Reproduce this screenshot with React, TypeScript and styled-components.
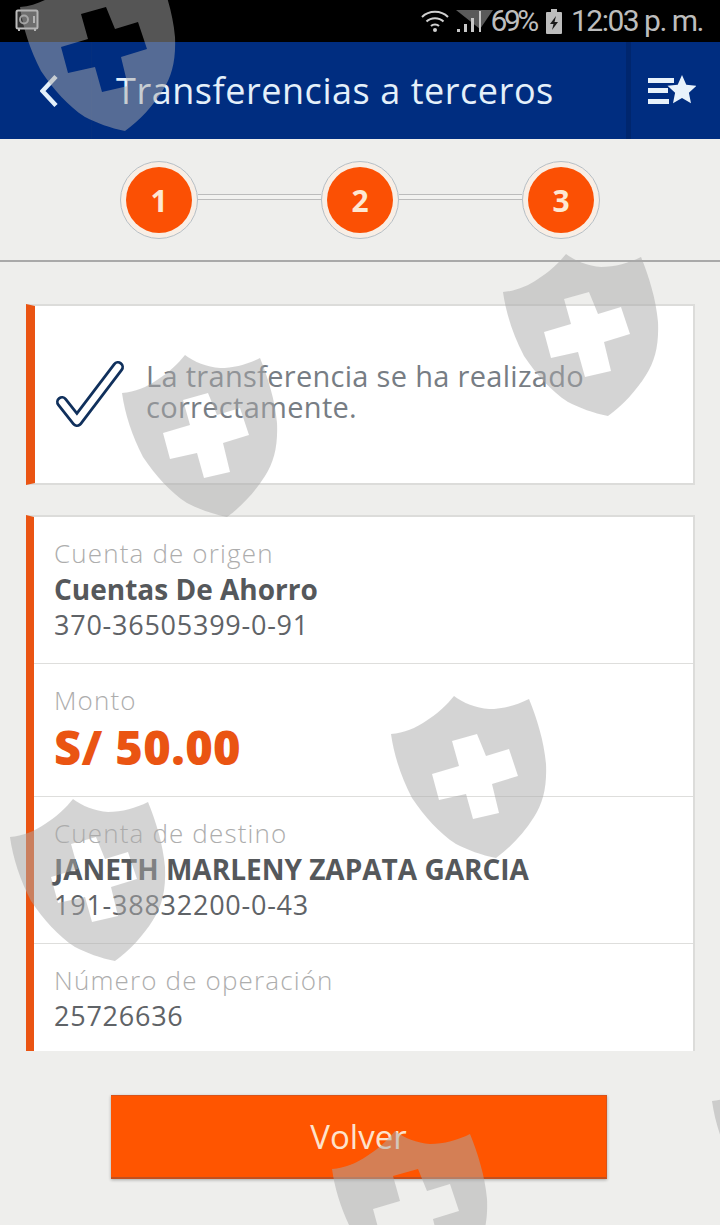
import React from "react"
import styled, { createGlobalStyle } from "styled-components"

const GlobalStyle = createGlobalStyle`
  html, body {
    margin: 0;
    padding: 0;
    background: #eeeeec;
  }
`

const Page = styled.div`
  position: relative;
  width: 720px;
  height: 1225px;
  overflow: hidden;
  background: #eeeeec;
  font-family: "Open Sans", Lato, sans-serif;
`

const StatusBar = styled.div`
  height: 42px;
  background: #000;
  display: flex;
  align-items: center;
  padding: 0 17px 0 15px;
  color: #bdbdbd;
  font-family: Roboto, sans-serif;
  font-size: 30px;
`

const StatusIcon = styled.svg<{ $gap?: number }>`
  display: block;
  flex: none;
  overflow: visible;
  margin-left: ${(p) => p.$gap ?? 0}px;
`

const Spacer = styled.div`
  flex: 1;
`

const Percent = styled.span`
  position: relative;
  margin-left: 8px;
  letter-spacing: -3.4px;
  line-height: 40px;
`

const Clock = styled.span`
  margin-left: 9px;
  letter-spacing: -1.5px;
  line-height: 40px;
`

const Header = styled.header`
  height: 97px;
  background: #002d80;
  display: flex;
  align-items: stretch;
`

const BackButton = styled.div`
  width: 92px;
  display: flex;
  align-items: center;
  padding-left: 40px;
  box-sizing: border-box;
  border-right: 1px solid #042f7e;
`

const Title = styled.h1`
  flex: 1;
  margin: 0;
  padding-left: 24px;
  display: flex;
  align-items: center;
  color: #e4f0fa;
  font-size: 36px;
  font-weight: 400;
  letter-spacing: 0.55px;
`

const FavButton = styled.div`
  width: 94px;
  box-sizing: border-box;
  border-left: 5px solid #00266e;
  display: flex;
  align-items: center;
  padding-left: 17px;
`

const Stepper = styled.div`
  height: 123px;
  box-sizing: border-box;
  padding-top: 22px;
  display: flex;
  justify-content: center;
  align-items: flex-start;
  border-bottom: 2px solid #a9a9a9;
`

const Step = styled.div`
  width: 78px;
  height: 78px;
  box-sizing: border-box;
  flex: none;
  border: 1px solid #b6bfc6;
  border-radius: 50%;
  padding: 5px;
  background: #f8eee5;
`

const StepNumber = styled.div`
  width: 100%;
  height: 100%;
  border-radius: 50%;
  background: #fb5004;
  color: #fde8d2;
  font-size: 30px;
  font-weight: 700;
  display: flex;
  align-items: center;
  justify-content: center;
`

const Connector = styled.div`
  width: 123px;
  height: 6px;
  margin-top: 33px;
  box-sizing: border-box;
  background: #f2f2f0;
  border-top: 1px solid #bcbcbc;
  border-bottom: 1px solid #bcbcbc;
`

const Content = styled.main`
  padding: 42px 25px 0 26px;
`

const Notice = styled.section`
  height: 181px;
  box-sizing: border-box;
  background: #fff;
  border: 2px solid #dcdcda;
  border-left: 9px solid #ea5412;
  display: flex;
  align-items: center;
  padding: 0 0 0 21px;
`

const CheckSvg = styled.svg`
  flex: none;
  margin-top: 4px;
  overflow: visible;
`

const NoticeText = styled.p`
  margin: 0 0 8px 18px;
  color: #777d84;
  font-size: 29px;
  font-weight: 400;
  line-height: 31px;
  letter-spacing: 0.3px;
`

const Details = styled.section`
  margin-top: 30px;
  height: 536px;
  box-sizing: border-box;
  background: #fff;
  border: 2px solid #dcdcda;
  border-bottom: none;
  border-left: 8px solid #ea5412;
  overflow: hidden;
`

const Row = styled.div<{ $height: number; $last?: boolean }>`
  height: ${(p) => p.$height}px;
  box-sizing: border-box;
  padding: 18px 0 0 20px;
  border-bottom: ${(p) => (p.$last ? "none" : "1px solid #dededc")};
`

const Label = styled.div`
  color: #adadad;
  font-size: 26px;
  font-weight: 300;
  line-height: 36px;
  letter-spacing: 1.15px;
`

const Name = styled.div`
  color: #55585b;
  font-size: 28px;
  font-weight: 700;
  line-height: 36px;
`

const AccountNumber = styled.div`
  color: #5f6367;
  font-size: 27px;
  font-weight: 400;
  line-height: 36px;
  letter-spacing: 0.75px;
`

const Amount = styled.div`
  color: #ea5412;
  font-size: 47px;
  font-weight: 800;
  line-height: 58px;
  letter-spacing: 0.4px;
`

const BackAction = styled.button`
  display: block;
  width: 496px;
  height: 84px;
  margin: 44px 0 0 111px;
  border: none;
  border-top: 1px solid #d9531a;
  border-bottom: 2px solid #c2501f;
  border-right: 1px solid #d9531a;
  box-shadow: 0 1px 3px rgba(0, 0, 0, 0.3);
  background: #ff5500;
  color: #fde3cc;
  font-family: "Open Sans", sans-serif;
  font-size: 33px;
  font-weight: 400;
  padding: 0;
`

const Watermark = styled.svg<{ $x: number; $y: number }>`
  position: absolute;
  left: ${(p) => p.$x}px;
  top: ${(p) => p.$y}px;
  pointer-events: none;
`

const SHIELD =
  "M63 1 C72 8 85 13 98 14 C112 14 126 10 138 4 C146 24 153 46 155 69 C156 92 152 108 143 122 C133 138 120 152 105 163 C90 160 77 155 65 149 C48 138 34 122 21 103 C10 82 3 60 0 39 C13 38 25 33 35 26 C46 19 56 10 63 1 Z " +
  "M61 46 L86 39 L95 61 L118 54 L127 81 L101 89 L108 118 L82 124 L75 99 L48 105 L41 79 L68 71 Z"

const marks = [
  { x: 20, y: -32 },
  { x: 503, y: 253 },
  { x: 122, y: 354 },
  { x: 391, y: 695 },
  { x: 10, y: 798 },
  { x: 332, y: 1130 },
  { x: 712, y: 1062 },
]

const Shield: React.FC<{ x: number; y: number }> = ({ x, y }) => (
  <Watermark $x={x} $y={y} width="156" height="164" viewBox="0 0 156 164">
    <path d={SHIELD} fill="rgb(170,170,170)" fillOpacity="0.5" fillRule="evenodd" />
  </Watermark>
)

const SafeIcon = () => (
  <StatusIcon width="24" height="24" viewBox="0 0 24 24" fill="none">
    <rect x="1.500" y="1.500" width="21" height="18" rx="1.500" stroke="#bdbdbd" strokeWidth="2" fill="#333" />
    <circle cx="9" cy="10.500" r="4" stroke="#a0a0a0" strokeWidth="2" />
    <path d="M19 7v7M4 20v2M20 20v2" stroke="#bdbdbd" strokeWidth="2" />
  </StatusIcon>
)

const WifiIcon = () => (
  <StatusIcon width="28" height="24" viewBox="0 0 28 24" fill="none">
    <path d="M1 8C8 1 20 1 27 8M5.500 12.500C10 8 18 8 22.500 12.500M10 17C12 15 16 15 18 17" stroke="#d0d0d0" strokeWidth="2" />
    <circle cx="14" cy="21" r="2" fill="#d0d0d0" />
  </StatusIcon>
)

const SignalIcon = () => (
  <StatusIcon $gap={7} width="26" height="24" viewBox="0 0 26 24">
    <path d="M0 1h37L24 20z" fill="#5a5a5a" />
    <path d="M1 20h3v3H1zM8 15h3v8H8zM15 9h3v14h-3zM23 2h2v21h-2z" fill="#c8c8c8" />
  </StatusIcon>
)

const BatteryIcon = () => (
  <StatusIcon $gap={10} width="16" height="25" viewBox="0 0 16 25">
    <path d="M5 0h6v3h4a1 1 0 0 1 1 1v20a1 1 0 0 1-1 1H1a1 1 0 0 1-1-1V4a1 1 0 0 1 1-1h4z" fill="#bdbdbd" />
    <path d="M10 7L4 15h3.500L6 21l6-8H8.500z" fill="#1a1a1a" />
  </StatusIcon>
)

const BackIcon = () => (
  <svg width="20" height="34" viewBox="0 0 20 34" fill="none">
    <path d="M16 2.500L2.500 17L16 31.500" stroke="#e4f0fa" strokeWidth="4.500" />
  </svg>
)

const FavIcon = () => (
  <svg width="48" height="32" viewBox="0 0 48 32" fill="#e8f2fb">
    <path d="M0 3h26v5H0zM0 13h20v5H0zM0 24h21v5H0z" />
    <path d="M34 0l4.300 9.700 10.200 1.100-7.600 7 2.100 10.500L34 23l-9 5.300 2.100-10.500-7.600-7 10.200-1.100z" />
  </svg>
)

const CheckIcon = () => (
  <CheckSvg width="72" height="70" viewBox="0 0 72 70" fill="none">
    <path d="M6 40L21 59L62 5" stroke="#10305c" strokeWidth="12" strokeLinecap="round" strokeLinejoin="round" />
    <path d="M6 40L21 59L62 5" stroke="#fff" strokeWidth="6.500" strokeLinecap="round" strokeLinejoin="round" />
  </CheckSvg>
)

export default function App() {
  return (
    <Page>
      <GlobalStyle />
      <StatusBar>
        <SafeIcon />
        <Spacer />
        <WifiIcon />
        <SignalIcon />
        <Percent>69%</Percent>
        <BatteryIcon />
        <Clock>12:03 p. m.</Clock>
      </StatusBar>
      <Header>
        <BackButton>
          <BackIcon />
        </BackButton>
        <Title>Transferencias a terceros</Title>
        <FavButton>
          <FavIcon />
        </FavButton>
      </Header>
      <Stepper>
        <Step>
          <StepNumber>1</StepNumber>
        </Step>
        <Connector />
        <Step>
          <StepNumber>2</StepNumber>
        </Step>
        <Connector />
        <Step>
          <StepNumber>3</StepNumber>
        </Step>
      </Stepper>
      <Content>
        <Notice>
          <CheckIcon />
          <NoticeText>
            La transferencia se ha realizado
            <br />
            correctamente.
          </NoticeText>
        </Notice>
        <Details>
          <Row $height={147}>
            <Label>Cuenta de origen</Label>
            <Name>Cuentas De Ahorro</Name>
            <AccountNumber>370-36505399-0-91</AccountNumber>
          </Row>
          <Row $height={133}>
            <Label>Monto</Label>
            <Amount>S/ 50.00</Amount>
          </Row>
          <Row $height={147}>
            <Label>Cuenta de destino</Label>
            <Name>JANETH MARLENY ZAPATA GARCIA</Name>
            <AccountNumber>191-38832200-0-43</AccountNumber>
          </Row>
          <Row $height={107} $last>
            <Label>Número de operación</Label>
            <AccountNumber>25726636</AccountNumber>
          </Row>
        </Details>
      </Content>
      <BackAction>Volver</BackAction>
      {marks.map((m) => (
        <Shield key={`${m.x}-${m.y}`} x={m.x} y={m.y} />
      ))}
    </Page>
  )
}
